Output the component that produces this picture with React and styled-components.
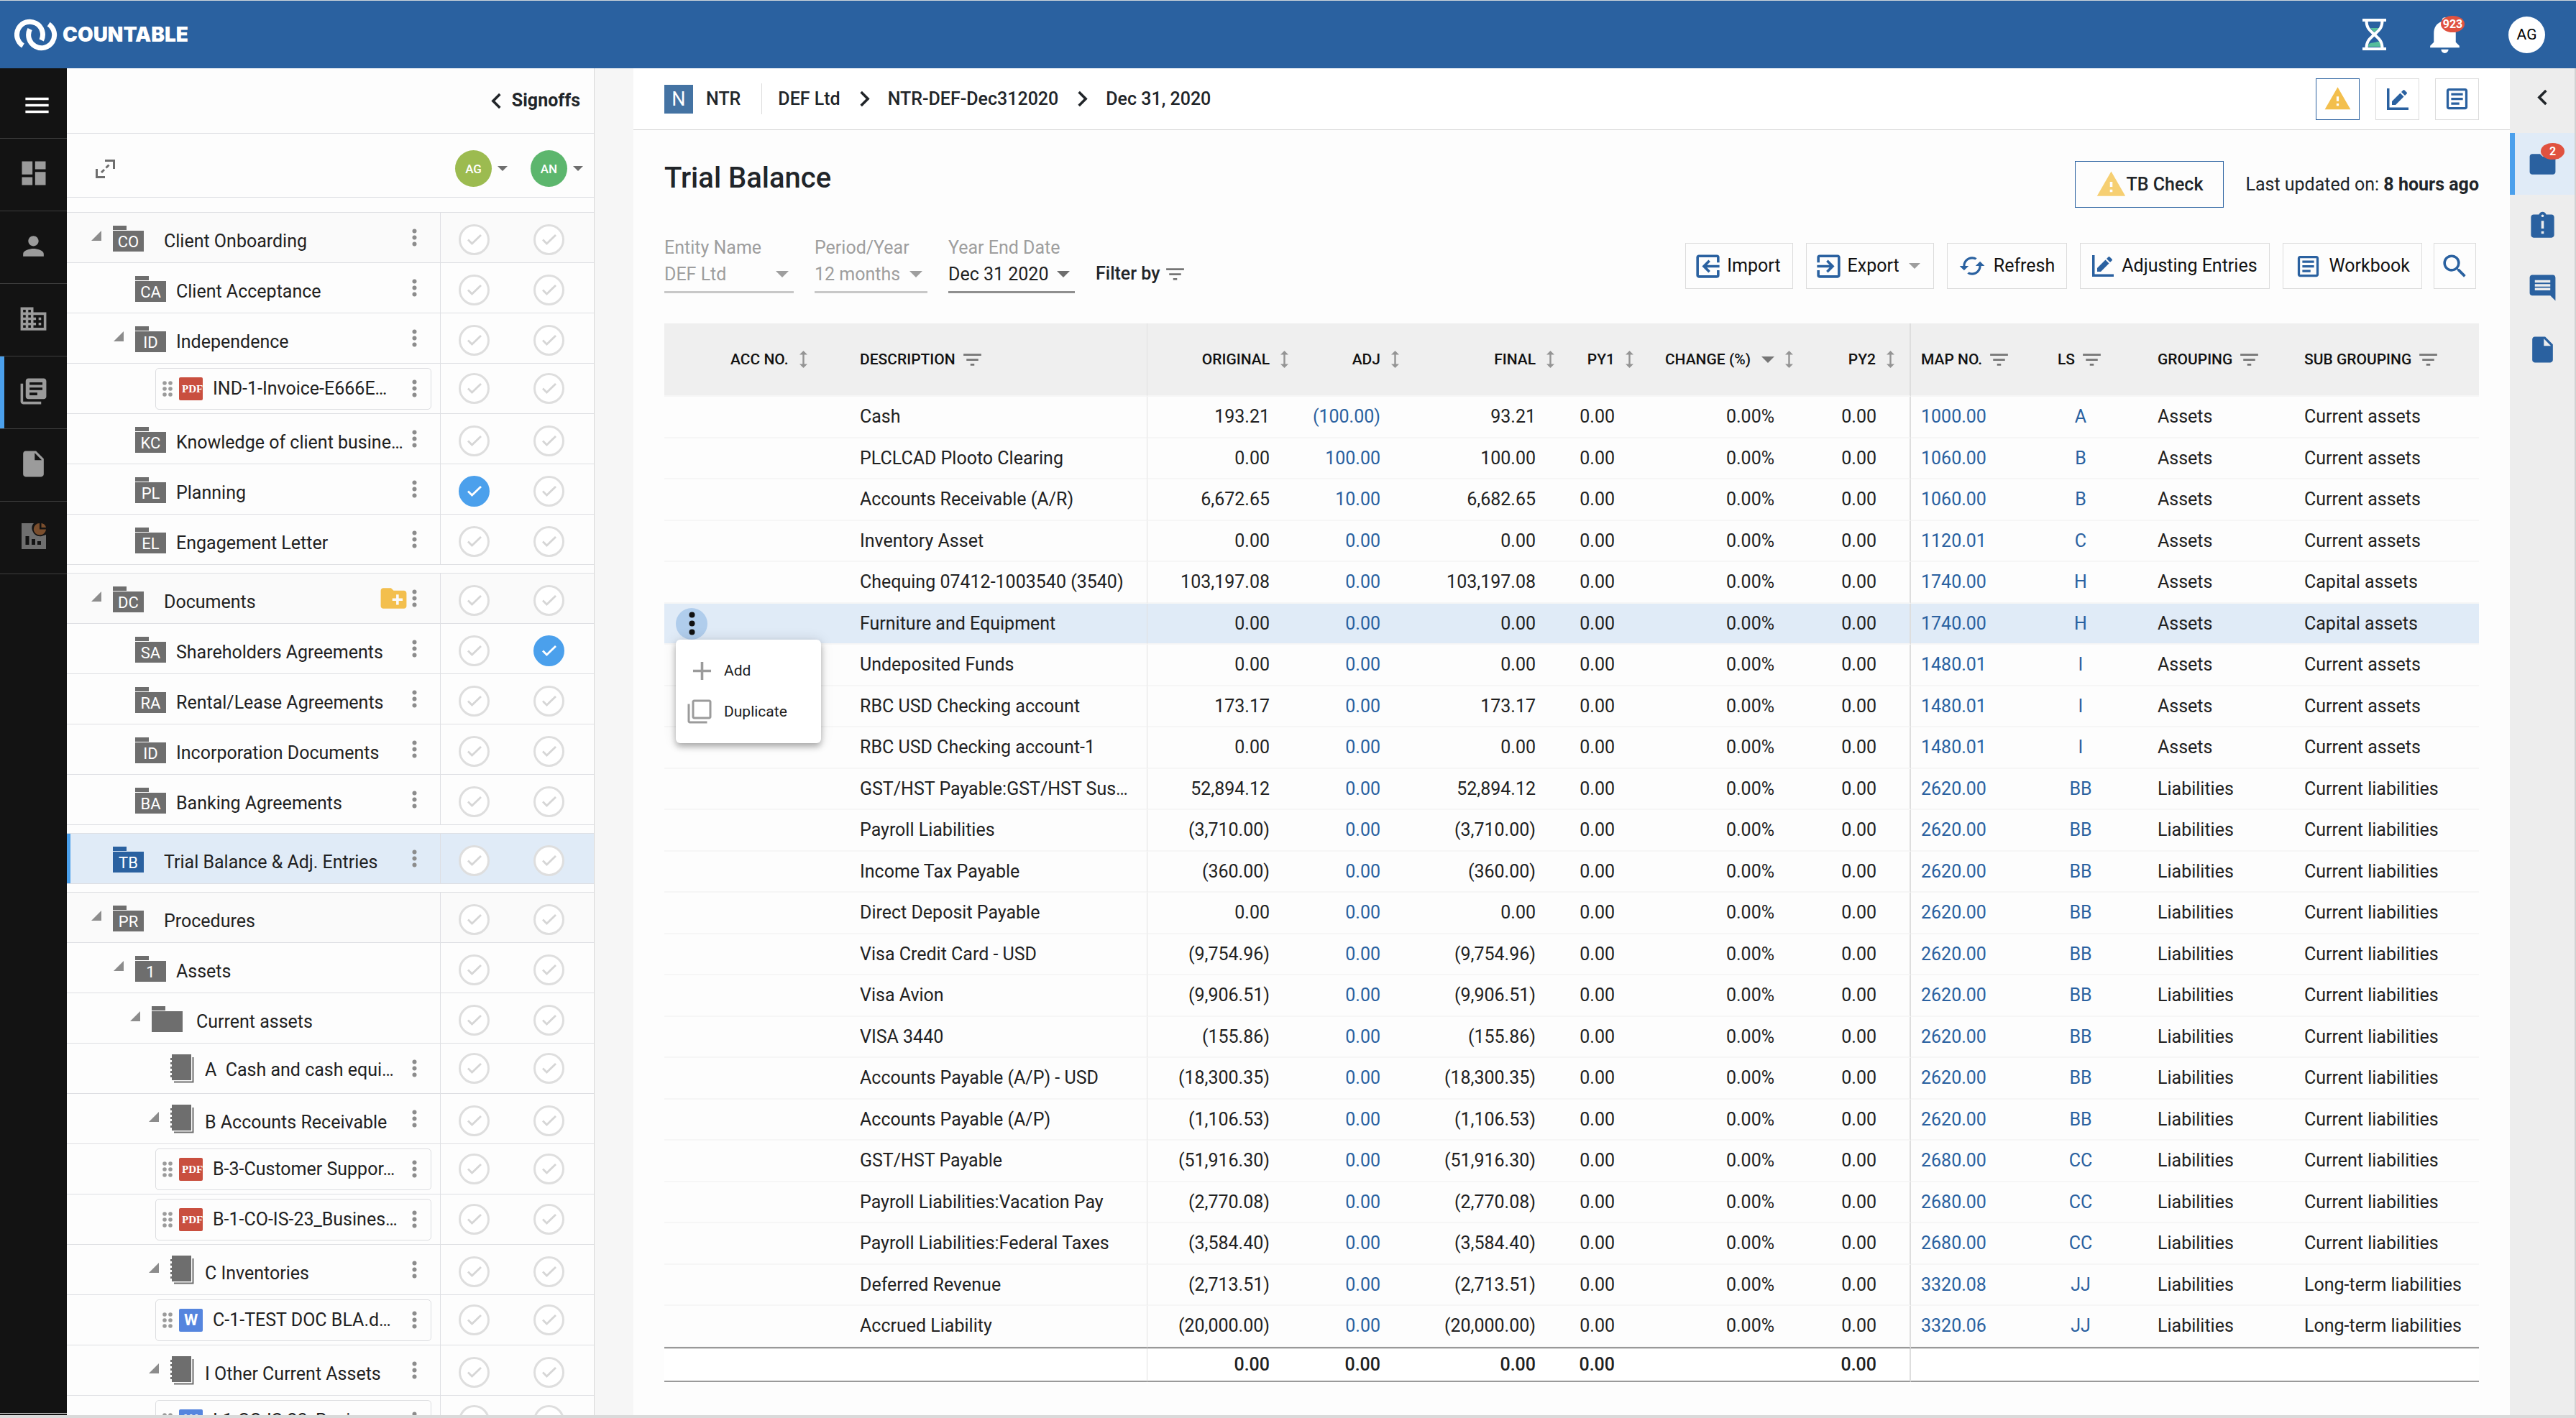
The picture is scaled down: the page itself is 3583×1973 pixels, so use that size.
import React from 'react'
import styled, { createGlobalStyle, css } from 'styled-components'
import {
  MdAdd,
  MdAssignmentLate,
  MdBusiness,
  MdCached,
  MdChevronLeft,
  MdChevronRight,
  MdComment,
  MdCreateNewFolder,
  MdDashboard,
  MdExitToApp,
  MdFilterList,
  MdFilterNone,
  MdFolder,
  MdInsertDriveFile,
  MdLibraryBooks,
  MdMenu,
  MdNotifications,
  MdOutlineArticle,
  MdPerson,
  MdSearch,
  MdWarning,
} from 'react-icons/md'

const colors = {
  brand: '#2a61a0',
  accent: '#4ba0ec',
  selected: '#e0ebf7',
  text: '#212121',
  heading: '#212529',
  muted: '#9e9e9e',
  icon: '#6e6e6e',
  line: '#dedfe3',
  danger: '#e05240',
  warning: '#f3bf4d',
  page: '#fdfdfd',
}

const GlobalStyle = createGlobalStyle`
  *, *::before, *::after {
    box-sizing: border-box;
  }

  body {
    margin: 0;
    font-family: Roboto, "Liberation Sans", sans-serif;
    font-size: 25px;
    line-height: 30px;
    color: ${colors.text};
    background: ${colors.page};
  }

  button, select, input {
    margin: 0;
    padding: 0;
    border: 0;
    background: none;
    font: inherit;
    color: inherit;
  }

  a {
    color: ${colors.brand};
    text-decoration: none;
  }

  svg {
    display: block;
    flex-shrink: 0;
  }
`

/* ---------- shell ---------- */

const Page = styled.div`
  display: flex;
  flex-direction: column;
  height: 100vh;
  overflow: hidden;
  border-bottom: 4px solid #dadada;
`

const TopBar = styled.header`
  display: flex;
  flex-shrink: 0;
  align-items: center;
  height: 95px;
  padding: 0 43px 0 20px;
  border-top: 1px solid #cfd6da;
  background: ${colors.brand};
  color: #fff;
`

const Brand = styled.a`
  display: flex;
  align-items: center;
  gap: 7px;
  margin-right: auto;
  color: #fff;
  font-family: Inter, sans-serif;
  font-size: 28px;
  font-weight: 900;
`

const BellButton = styled.button`
  position: relative;
  margin: 0 58px 0 51px;
`

const Badge = styled.span`
  position: absolute;
  top: ${props => props.$top}px;
  left: ${props => props.$left}px;
  width: 33px;
  height: 23px;
  border-radius: 50%;
  background: ${colors.danger};
  color: #fff;
  font-size: 16px;
  font-weight: 700;
  line-height: 23px;
  text-align: center;
`

const Avatar = styled.span`
  display: flex;
  align-items: center;
  justify-content: center;
  width: 51px;
  height: 51px;
  border-radius: 50%;
  background: ${props => props.$color};
  color: ${props => props.$text || '#fff'};
  font-size: ${props => props.$size || 17}px;
`

const Body = styled.div`
  display: flex;
  flex: 1;
  min-height: 0;
`

const Rail = styled.nav`
  display: flex;
  flex-direction: column;
  flex-shrink: 0;
  width: 93px;
  background: #131313;
  color: #9b9b9b;

  &::after {
    content: '';
    height: 3px;
    margin-top: auto;
    border-top: 1px solid #d0d0d0;
  }
`

const RailButton = styled.button`
  display: flex;
  align-items: center;
  justify-content: center;
  height: ${props => (props.$first ? 98 : 101)}px;
  padding: ${props => (props.$first ? '6px 0 0 9px' : '0 0 4px')};
  border-bottom: 1px solid #3d3d3d;
  color: ${props => (props.$first ? '#fff' : 'inherit')};
  box-shadow: ${props => (props.$active ? `inset 6px 0 ${colors.accent}` : 'none')};
`

/* ---------- sign-off tree ---------- */

const Sidebar = styled.aside`
  display: flex;
  flex-direction: column;
  flex-shrink: 0;
  width: 734px;
  overflow: hidden;
  border-right: 1px solid #d8d8d8;
`

const SidebarTitle = styled.div`
  display: flex;
  flex-shrink: 0;
  align-items: center;
  justify-content: flex-end;
  height: 91px;
  padding-right: 19px;
  border-bottom: 1px solid ${colors.line};
  color: ${colors.heading};
  font-weight: 700;
`

const Reviewers = styled.div`
  display: flex;
  flex-shrink: 0;
  align-items: center;
  gap: 32px;
  height: 89px;
  padding: 9px 15px 0 40px;
  border-bottom: 1px solid ${colors.line};
  color: ${colors.icon};
`

const Reviewer = styled.button`
  display: flex;
  align-items: center;
  gap: 8px;
  font-weight: 500;
`

const ExpandButton = styled.button`
  margin-right: auto;
`

const Tree = styled.div`
  padding-top: 9px;
`

const TreeSection = styled.ul`
  margin: 11px 0 0;
  padding: 0;
  border-top: 1px solid ${colors.line};
  list-style: none;
`

const TreeRow = styled.li`
  display: flex;
  height: 70px;
  border-bottom: 1px solid ${colors.line};
  background: ${props => (props.$active ? colors.selected : props.$head ? '#fafafa' : colors.page)};
  box-shadow: ${props => (props.$active ? `inset 5px 0 ${colors.accent}` : 'none')};
`

const indents = { 1: 34, 2: 65, 3: 88, 4: 114 }
const labelGaps = { 1: 28, 2: 14, 3: 19, 4: 15 }

const TreeCell = styled.div`
  display: flex;
  align-items: center;
  width: 520px;
  padding: 0 32px 0 ${props => indents[props.$level]}px;
  border-right: 1px solid ${colors.line};
  color: #8c8c8c;
`

const FileCell = styled(TreeCell)`
  padding: 0 12px 0 123px;
`

const CaretSlot = styled.span`
  width: 14px;
  margin: 0 16px 5px 0;
`

const TreeLabel = styled.span`
  flex: 1;
  min-width: 0;
  padding-top: ${props => (props.$flat ? 4 : 11)}px;
  margin-left: ${props => labelGaps[props.$level]}px;
  overflow: hidden;
  color: ${colors.text};
  white-space: pre;
`

const NewFolderButton = styled.button`
  margin-right: 4px;
  color: ${colors.warning};
`

const FolderTag = styled.span`
  width: 43px;
  margin-top: 2px;
  color: #fff;
  font-size: 22px;
  line-height: 32px;
  text-align: center;

  &::before {
    content: '';
    display: block;
    width: 19px;
    height: 6px;
    margin-bottom: 1px;
    background: ${props => (props.$active ? colors.brand : colors.icon)};
  }
`

const FolderBody = styled.span`
  display: block;
  height: 29px;
  background: ${props => (props.$active ? colors.brand : colors.icon)};
`

const FileCard = styled.div`
  display: flex;
  align-items: center;
  width: 100%;
  height: 58px;
  padding: 0 19px 0 9px;
  border: 1px solid #dcdde0;
  border-radius: 5px;
`

const FileType = styled.span`
  width: 33px;
  height: 32px;
  margin: 0 14px 0 9px;
  padding-left: ${props => (props.$pdf ? 4 : 0)}px;
  overflow: hidden;
  border-radius: 2px;
  background: ${props => (props.$pdf ? '#c94f3f' : '#5585de')};
  color: #fff;
  font-family: ${props => (props.$pdf ? '"Liberation Serif", serif' : 'Roboto, sans-serif')};
  font-size: ${props => (props.$pdf ? 15 : 22)}px;
  font-weight: 700;
  line-height: 32px;
  text-align: ${props => (props.$pdf ? 'left' : 'center')};
`

const FileName = styled.span`
  flex: 1;
  overflow: hidden;
  color: ${colors.text};
  white-space: nowrap;
`

const Signoffs = styled.div`
  display: flex;
  align-items: center;
  gap: 61px;
  padding-left: 25px;
  padding-top: ${props => (props.$flat ? 0 : 6)}px;
`

const SignoffLabel = styled.label`
  display: grid;
  place-items: center;
  width: 43px;
  height: 43px;
  color: #d6d6d6;

  & > * {
    grid-area: 1 / 1;
  }

  svg {
    pointer-events: none;
  }

  input {
    width: 43px;
    height: 43px;
    border: 3px solid #dedede;
    border-radius: 50%;
    background: #fff;
    appearance: none;
  }

  input:checked {
    border-color: ${colors.accent};
    background: ${colors.accent};
  }

  input:checked + svg {
    color: #fff;
  }
`

const Gutter = styled.div`
  flex-shrink: 0;
  width: 54px;
  background: #f6f6f6;
`

/* ---------- main panel ---------- */

const Main = styled.main`
  flex: 1;
  min-width: 0;
`

const Crumbs = styled.nav`
  display: flex;
  align-items: center;
  height: 86px;
  padding: 0 43px;
  border-bottom: 1px solid #d6d6d6;
  background: #fff;
  font-weight: 500;

  a {
    color: ${colors.heading};
  }

  & > svg {
    margin: 0 11px 0 12px;
    color: ${colors.heading};
  }
`

const ClientInitial = styled.span`
  width: 40px;
  height: 40px;
  margin-right: 18px;
  background: #4473a3;
  color: #fff;
  font-size: 27px;
  font-weight: 400;
  line-height: 40px;
  text-align: center;
`

const CrumbDivider = styled.span`
  width: 1px;
  height: 43px;
  margin: 0 22px 0 29px;
  background: #dcdcdc;
`

const CrumbActions = styled.div`
  display: flex;
  gap: 22px;
  margin-left: auto;
`

const IconButton = styled.button`
  display: flex;
  align-items: center;
  justify-content: center;
  width: 61px;
  height: 58px;
  border: 1px solid ${props => (props.$active ? colors.brand : '#dcdcdc')};

  svg {
    color: ${props => (props.$active ? colors.warning : colors.brand)};
  }
`

const Content = styled.div`
  padding: 43px 43px 0;
`

const TitleRow = styled.div`
  display: flex;
  align-items: center;
  height: 65px;
  color: ${colors.heading};
`

const Title = styled.h1`
  margin: 0 auto 18px 0;
  font-size: 40px;
  font-weight: 500;
  line-height: 48px;
`

const CheckButton = styled.button`
  display: flex;
  align-items: center;
  height: 65px;
  margin-right: 30px;
  padding: 0 28px;
  border: 1px solid ${colors.brand};
  font-weight: 500;

  svg {
    color: #f6cf72;
  }
`

const Toolbar = styled.div`
  display: flex;
  align-items: flex-end;
  margin: 41px 0 42px;
`

const Field = styled.div`
  width: ${props => props.$width}px;
  margin-right: 29px;
  color: ${props => (props.$enabled ? colors.text : colors.muted)};

  label {
    display: block;
    color: ${colors.muted};
  }
`

const SelectBox = styled.div`
  display: grid;
  align-items: center;
  height: 48px;
  padding-bottom: 2px;
  border-bottom: 3px solid ${props => (props.$enabled ? '#8f8f8f' : '#c8c8c8')};

  & > * {
    grid-area: 1 / 1;
  }

  select {
    width: 100%;
    appearance: none;
    opacity: 1;
  }

  svg {
    margin-left: auto;
    margin-right: 7px;
    color: ${props => (props.$enabled ? '#6e6e6e' : colors.muted)};
    pointer-events: none;
  }
`

const FilterBy = styled.button`
  display: flex;
  align-items: center;
  gap: 5px;
  height: 54px;
  color: ${colors.heading};
  font-weight: 500;

  svg {
    color: #767676;
  }
`

const Actions = styled.div`
  display: flex;
  gap: 18px;
  margin: 0 4px 6px auto;
`

const ActionButton = styled.button`
  display: flex;
  align-items: center;
  gap: ${props => (props.$roomy ? 8 : 5)}px;
  height: 64px;
  padding: 0 16px 0 ${props => (props.$roomy ? 13 : 9)}px;
  border: 1px solid #dcdcdc;
  color: #111;

  span + svg {
    margin: 0 2px 0 8px;
    color: ${colors.muted};
  }
`

const IconBox = styled.span`
  display: flex;
  justify-content: center;
  width: 43px;
  color: ${colors.brand};
  transform: ${props => (props.$flip ? 'scaleX(-1)' : 'none')};
`

const SearchButton = styled(IconButton)`
  width: 59px;
  height: 64px;
  margin-left: -2px;
`

/* ---------- trial balance table ---------- */

const Table = styled.table`
  width: 100%;
  border-spacing: 0;
  table-layout: fixed;
`

const ruled = css`
  &:nth-child(2) {
    border-right: 1px solid #e0e0e0;
  }

  &:nth-child(8) {
    border-right: 2px solid #dedede;
  }
`

const Th = styled.th`
  height: 102px;
  padding: 0 ${props => (props.$edge ? 21 : 10)}px 0 14px;
  border-bottom: 2px solid #f6f6f6;
  background: #efefef;
  color: #111;
  font-size: 21px;
  font-weight: 500;
  ${ruled}
`

const ThInner = styled.div`
  display: flex;
  align-items: center;
  justify-content: ${props => (props.$align === 'right' ? 'flex-end' : props.$align === 'center' ? 'center' : 'flex-start')};
  gap: ${props => (props.$sort ? 15 : 7)}px;
  padding: 0 ${props => (props.$align === 'center' ? 4 : 0)}px 0 ${props => props.$indent || 0}px;
  white-space: nowrap;

  svg {
    color: #767676;
  }
`

const Row = styled.tr`
  height: 57px;
  background: ${props => (props.$active ? colors.selected : 'transparent')};

  &:nth-child(odd) {
    height: 58px;
  }
`

const Td = styled.td`
  padding: 0 ${props => (props.$edge ? 46 : props.$align === 'right' ? 36 : 14)}px 0 14px;
  border-bottom: 2px solid #f6f6f6;
  text-align: ${props => props.$align || 'left'};
  white-space: nowrap;
  ${ruled}
`

const TotalTd = styled(Td)`
  height: 48px;
  border-top: 1px solid #111;
  border-bottom: 2px solid #9a9a9a;
  background: #fff;
  font-weight: 500;
`

const RowMenuAnchor = styled.div`
  position: relative;
  width: 44px;
  margin-left: 2px;
`

const RowMenuButton = styled.button`
  display: flex;
  align-items: center;
  justify-content: center;
  width: 44px;
  height: 44px;
  border-radius: 50%;
  background: #b0cdec;
  color: #111;
`

const RowMenu = styled.div`
  position: absolute;
  z-index: 2;
  top: 44px;
  left: 0;
  width: 202px;
  padding: 15px 0;
  border-radius: 6px;
  background: #fff;
  box-shadow: 0 5px 9px rgba(0, 0, 0, 0.28), 0 0 18px rgba(0, 0, 0, 0.12);
`

const RowMenuItem = styled.button`
  display: grid;
  grid-template-columns: 43px auto;
  align-items: center;
  gap: 9px;
  width: 100%;
  height: 57px;
  padding-left: 15px;
  font-size: 21px;
  text-align: left;

  svg {
    color: #9b9b9b;
  }
`

/* ---------- right rail ---------- */

const SideTabs = styled.nav`
  display: flex;
  flex-direction: column;
  flex-shrink: 0;
  width: 92px;
  border-right: 2px solid #d2d2d2;
  background: #ededed;
`

const SideTab = styled.button`
  position: relative;
  display: flex;
  align-items: center;
  justify-content: center;
  height: ${props => (props.$toggle ? 90 : 86)}px;
  padding-bottom: ${props => (props.$toggle ? 10 : 0)}px;
  background: ${props => (props.$active ? colors.selected : 'transparent')};
  box-shadow: ${props => (props.$active ? `inset 7px 0 ${colors.accent}` : 'none')};
  color: ${props => (props.$toggle ? colors.heading : colors.brand)};
`

/* ---------- drawings ---------- */

const Logo = () => (
  <svg width="60" height="45" viewBox="21 25 60 45" fill="none" stroke="currentColor" strokeWidth="7">
    <path d="M33 62.5A18 18 0 1 1 58.7 55" />
    <path d="M42.6 39.5A18 18 0 1 0 68.6 32.6" />
  </svg>
)

const Hourglass = () => (
  <svg width="33" height="44" viewBox="0 0 33 44" fill="none">
    <path d="M11 13h12l-6.500 6z" fill="#56bd9b" />
    <path d="M8 39c0-4 1-5 9-6 3-.5 6-2.500 8 0l1 6z" fill="#56bd9b" />
    <path d="M5.500 3c0 11 6 14 11 19 5 5 11 8 11 19M27.500 3c0 11-6 14-11 19-5 5-11 8-11 19" stroke="#fff" strokeWidth="4" />
    <path d="M0 2h33M0 42h33" stroke="#fff" strokeWidth="4" />
  </svg>
)

const ReportIcon = () => (
  <svg width="34" height="36" viewBox="0 0 34 36">
    <path d="M0 0h17c-3 3-3 7-2 10 2 6 7 9 13 8l6-2v20H0z" fill="#6f6f6f" />
    <path d="M5.500 18h5v12h-5zM14 22h5v8h-5zM22 25h5v5h-5z" fill="#131313" />
    <path d="M25 0a8 8 0 0 0 0 16.500c5 0 8.500-3.500 9-8H25z" fill="#7a4e2d" />
    <path d="M27.500 0c3.500.5 6 3 6.500 6h-6.500z" fill="#7a4e2d" />
  </svg>
)

const Expand = () => (
  <svg width="27" height="26" viewBox="0 0 27 26" fill="none" stroke="currentColor" strokeWidth="3">
    <path d="M13 1.500h12.500V13M1.500 13v11.500H13M8 18l4-4M14.500 11.500l4-4" />
  </svg>
)

const Triangle = ({ size = 18 }) => (
  <svg width={size} height={size / 2} viewBox="0 0 18 9" fill="currentColor">
    <path d="M0 0h18L9 9z" />
  </svg>
)

const Caret = () => (
  <svg width="14" height="14" viewBox="0 0 14 14" fill="currentColor">
    <path d="M14 0v14H0z" />
  </svg>
)

const Kebab = ({ r = 3 }) => (
  <svg width={r * 2 + 1} height={r * 8 + 1} viewBox={`0 0 ${r * 2 + 1} ${r * 8 + 1}`} fill="currentColor">
    <circle cx={r + 0.5} cy={r + 0.5} r={r} />
    <circle cx={r + 0.5} cy={r * 4 + 0.5} r={r} />
    <circle cx={r + 0.5} cy={r * 7 + 0.5} r={r} />
  </svg>
)

const Grip = () => (
  <svg width="14" height="22" viewBox="0 0 14 22" fill="#9b9b9b">
    {[3, 11, 19].map(y => (
      <g key={y}>
        <circle cx="3" cy={y} r="2.8" />
        <circle cx="11" cy={y} r="2.8" />
      </g>
    ))}
  </svg>
)

const Book = () => (
  <svg width="33" height="40" viewBox="0 0 33 40">
    <path d="M2 0h27v36H2z" fill="#6e6e6e" />
    <path d="M31.500 4v34.500H5" fill="none" stroke="#6e6e6e" strokeWidth="2" />
    <path d="M1 5v30" fill="none" stroke="#6e6e6e" strokeWidth="2" strokeDasharray="3 3" />
  </svg>
)

const Tick = () => (
  <svg width="20" height="15" viewBox="0 0 20 15" fill="none" stroke="currentColor" strokeWidth="2.800">
    <path d="M1 7.500l5.500 5.500L19 1" />
  </svg>
)

const Sort = () => (
  <svg width="11" height="24" viewBox="0 0 11 24" fill="#949494">
    <path d="M5.500 0L11 5.500H6.700v13H11L5.500 24 0 18.500h4.300v-13H0z" />
  </svg>
)

const ChartEdit = () => (
  <svg width="30" height="30" viewBox="0 0 30 30" fill="currentColor">
    <path d="M0 0h3.500v26.500H30V30H0z" />
    <path d="M7 23v-5L18.500 6.500l5 5L12 23z" />
    <path d="M20 5l2.500-2.500q1-1 2 0l3 3q1 1 0 2L25 10z" />
  </svg>
)

/* ---------- data ---------- */

const sections = [
  [
    { level: 1, tag: 'CO', label: 'Client Onboarding', open: true, head: true },
    { level: 2, tag: 'CA', label: 'Client Acceptance' },
    { level: 2, tag: 'ID', label: 'Independence', open: true },
    { file: 'PDF', label: 'IND-1-Invoice-E666E…' },
    { level: 2, tag: 'KC', label: 'Knowledge of client busine…' },
    { level: 2, tag: 'PL', label: 'Planning', signed: [true, false] },
    { level: 2, tag: 'EL', label: 'Engagement Letter' },
  ],
  [
    { level: 1, tag: 'DC', label: 'Documents', open: true, head: true, addFolder: true },
    { level: 2, tag: 'SA', label: 'Shareholders Agreements', signed: [false, true] },
    { level: 2, tag: 'RA', label: 'Rental/Lease Agreements' },
    { level: 2, tag: 'ID', label: 'Incorporation Documents' },
    { level: 2, tag: 'BA', label: 'Banking Agreements' },
  ],
  [{ level: 1, tag: 'TB', label: 'Trial Balance & Adj. Entries', active: true }],
  [
    { level: 1, tag: 'PR', label: 'Procedures', open: true, head: true, noMenu: true },
    { level: 2, tag: '1', label: 'Assets', open: true, noMenu: true },
    { level: 3, tag: '', label: 'Current assets', open: true, noMenu: true },
    { level: 4, label: 'A  Cash and cash equi…', flat: true },
    { level: 4, label: 'B Accounts Receivable', open: true },
    { file: 'PDF', label: 'B-3-Customer Suppor…' },
    { file: 'PDF', label: 'B-1-CO-IS-23_Busines…' },
    { level: 4, label: 'C Inventories', open: true },
    { file: 'W', label: 'C-1-TEST DOC BLA.d…' },
    { level: 4, label: 'I Other Current Assets', open: true },
    { file: 'W', label: 'I-1-CO-IS-23_Busine…' },
  ],
]

const accounts = [
  ['Cash', '193.21', '(100.00)', '93.21', '1000.00', 'A', 'Assets', 'Current assets'],
  ['PLCLCAD Plooto Clearing', '0.00', '100.00', '100.00', '1060.00', 'B', 'Assets', 'Current assets'],
  ['Accounts Receivable (A/R)', '6,672.65', '10.00', '6,682.65', '1060.00', 'B', 'Assets', 'Current assets'],
  ['Inventory Asset', '0.00', '0.00', '0.00', '1120.01', 'C', 'Assets', 'Current assets'],
  ['Chequing 07412-1003540 (3540)', '103,197.08', '0.00', '103,197.08', '1740.00', 'H', 'Assets', 'Capital assets'],
  ['Furniture and Equipment', '0.00', '0.00', '0.00', '1740.00', 'H', 'Assets', 'Capital assets'],
  ['Undeposited Funds', '0.00', '0.00', '0.00', '1480.01', 'I', 'Assets', 'Current assets'],
  ['RBC USD Checking account', '173.17', '0.00', '173.17', '1480.01', 'I', 'Assets', 'Current assets'],
  ['RBC USD Checking account-1', '0.00', '0.00', '0.00', '1480.01', 'I', 'Assets', 'Current assets'],
  ['GST/HST Payable:GST/HST Sus…', '52,894.12', '0.00', '52,894.12', '2620.00', 'BB', 'Liabilities', 'Current liabilities'],
  ['Payroll Liabilities', '(3,710.00)', '0.00', '(3,710.00)', '2620.00', 'BB', 'Liabilities', 'Current liabilities'],
  ['Income Tax Payable', '(360.00)', '0.00', '(360.00)', '2620.00', 'BB', 'Liabilities', 'Current liabilities'],
  ['Direct Deposit Payable', '0.00', '0.00', '0.00', '2620.00', 'BB', 'Liabilities', 'Current liabilities'],
  ['Visa Credit Card - USD', '(9,754.96)', '0.00', '(9,754.96)', '2620.00', 'BB', 'Liabilities', 'Current liabilities'],
  ['Visa Avion', '(9,906.51)', '0.00', '(9,906.51)', '2620.00', 'BB', 'Liabilities', 'Current liabilities'],
  ['VISA 3440', '(155.86)', '0.00', '(155.86)', '2620.00', 'BB', 'Liabilities', 'Current liabilities'],
  ['Accounts Payable (A/P) - USD', '(18,300.35)', '0.00', '(18,300.35)', '2620.00', 'BB', 'Liabilities', 'Current liabilities'],
  ['Accounts Payable (A/P)', '(1,106.53)', '0.00', '(1,106.53)', '2620.00', 'BB', 'Liabilities', 'Current liabilities'],
  ['GST/HST Payable', '(51,916.30)', '0.00', '(51,916.30)', '2680.00', 'CC', 'Liabilities', 'Current liabilities'],
  ['Payroll Liabilities:Vacation Pay', '(2,770.08)', '0.00', '(2,770.08)', '2680.00', 'CC', 'Liabilities', 'Current liabilities'],
  ['Payroll Liabilities:Federal Taxes', '(3,584.40)', '0.00', '(3,584.40)', '2680.00', 'CC', 'Liabilities', 'Current liabilities'],
  ['Deferred Revenue', '(2,713.51)', '0.00', '(2,713.51)', '3320.08', 'JJ', 'Liabilities', 'Long-term liabilities'],
  ['Accrued Liability', '(20,000.00)', '0.00', '(20,000.00)', '3320.06', 'JJ', 'Liabilities', 'Long-term liabilities'],
]

// widths are shares of the row, the fixed layout stretches them to fit
const columns = [
  { name: 'ACC NO.', width: 258, sort: true, align: 'left', indent: 78 },
  { name: 'DESCRIPTION', width: 414 },
  { name: 'ORIGINAL', width: 206, sort: true, align: 'right' },
  { name: 'ADJ', width: 154, sort: true, align: 'right' },
  { name: 'FINAL', width: 216, sort: true, align: 'right' },
  { name: 'PY1', width: 110, sort: true, align: 'right' },
  { name: 'CHANGE (%)', width: 222, sort: true, drop: true, align: 'right' },
  { name: 'PY2', width: 154, sort: true, align: 'right', edge: true },
  { name: 'MAP NO.', width: 143 },
  { name: 'LS', width: 186, align: 'center' },
  { name: 'GROUPING', width: 204 },
  { name: 'SUB GROUPING', width: 257 },
]

/* ---------- pieces ---------- */

const SignoffChecks = ({ row }) => (
  <Signoffs $flat={row.flat || row.file}>
    {['AG', 'AN'].map((who, i) => (
      <SignoffLabel key={who}>
        <input
          type="checkbox"
          aria-label={`${row.label} signed off by ${who}`}
          defaultChecked={Boolean(row.signed && row.signed[i])}
        />
        <Tick />
      </SignoffLabel>
    ))}
  </Signoffs>
)

const TreeItem = ({ row }) => (
  <TreeRow $head={row.head} $active={row.active}>
    {row.file ? (
      <FileCell>
        <FileCard>
          <Grip />
          <FileType $pdf={row.file === 'PDF'}>{row.file}</FileType>
          <FileName>{row.label}</FileName>
          <button type="button" aria-label="File options"><Kebab /></button>
        </FileCard>
      </FileCell>
    ) : (
      <TreeCell $level={row.level}>
        <CaretSlot>{row.open && <Caret />}</CaretSlot>
        {row.level === 4 ? (
          <Book />
        ) : (
          <FolderTag $active={row.active}>
            <FolderBody $active={row.active}>{row.tag}</FolderBody>
          </FolderTag>
        )}
        <TreeLabel $level={row.level} $flat={row.flat}>{row.label}</TreeLabel>
        {row.addFolder && (
          <NewFolderButton type="button" aria-label="New folder">
            <MdCreateNewFolder size={43} />
          </NewFolderButton>
        )}
        {!row.noMenu && (
          <button type="button" aria-label="Folder options"><Kebab /></button>
        )}
      </TreeCell>
    )}
    <SignoffChecks row={row} />
  </TreeRow>
)

const SelectField = ({ id, label, value, width, enabled }) => (
  <Field $width={width} $enabled={enabled}>
    <label htmlFor={id}>{label}</label>
    <SelectBox $enabled={enabled}>
      <select id={id} defaultValue={value} disabled={!enabled}>
        <option>{value}</option>
      </select>
      <Triangle />
    </SelectBox>
  </Field>
)

const HeaderCell = ({ column }) => (
  <Th scope="col" $edge={column.edge}>
    <ThInner $align={column.align} $indent={column.indent} $sort={column.sort}>
      <span>{column.name}</span>
      {column.drop && <Triangle />}
      {column.sort ? <Sort /> : <MdFilterList size={33} />}
    </ThInner>
  </Th>
)

const AccountRow = ({ account, active }) => {
  const [name, original, adj, final, mapNo, ls, group, subGroup] = account
  return (
    <Row $active={active}>
      <Td>
        {active && (
          <RowMenuAnchor>
            <RowMenuButton type="button" aria-label="Row options"><Kebab r={4} /></RowMenuButton>
            <RowMenu>
              <RowMenuItem type="button"><MdAdd size={43} />Add</RowMenuItem>
              <RowMenuItem type="button"><MdFilterNone size={36} />Duplicate</RowMenuItem>
            </RowMenu>
          </RowMenuAnchor>
        )}
      </Td>
      <Td>{name}</Td>
      <Td $align="right">{original}</Td>
      <Td $align="right"><a href="#adjustments">{adj}</a></Td>
      <Td $align="right">{final}</Td>
      <Td $align="right">0.00</Td>
      <Td $align="right">0.00%</Td>
      <Td $align="right" $edge>0.00</Td>
      <Td><a href="#map">{mapNo}</a></Td>
      <Td $align="center"><a href="#leadsheet">{ls}</a></Td>
      <Td>{group}</Td>
      <Td>{subGroup}</Td>
    </Row>
  )
}

const TrialBalanceTable = () => (
  <Table>
    <colgroup>
      {columns.map(column => <col key={column.name} width={column.width} />)}
    </colgroup>
    <thead>
      <tr>{columns.map(column => <HeaderCell key={column.name} column={column} />)}</tr>
    </thead>
    <tbody>
      {accounts.map(account => (
        <AccountRow
          key={account[0]}
          account={account}
          active={account[0] === 'Furniture and Equipment'}
        />
      ))}
    </tbody>
    <tfoot>
      <tr>
        {['', '', '0.00', '0.00', '0.00', '0.00', '', '0.00', '', '', '', ''].map((total, i) => (
          <TotalTd key={columns[i].name} $align={columns[i].align} $edge={columns[i].edge}>{total}</TotalTd>
        ))}
      </tr>
    </tfoot>
  </Table>
)

const App = () => (
  <Page>
    <GlobalStyle />
    <TopBar>
      <Brand href="#home"><Logo />COUNTABLE</Brand>
      <button type="button" aria-label="Time tracking"><Hourglass /></button>
      <BellButton type="button" aria-label="Notifications">
        <MdNotifications size={61} />
        <Badge $top={4} $left={25}>923</Badge>
      </BellButton>
      <Avatar $color="#fff" $text="#000" $size={21}>AG</Avatar>
    </TopBar>
    <Body>
      <Rail>
        <RailButton type="button" aria-label="Menu" $first><MdMenu size={43} /></RailButton>
        <RailButton type="button" aria-label="Dashboard"><MdDashboard size={44} /></RailButton>
        <RailButton type="button" aria-label="Contacts"><MdPerson size={43} /></RailButton>
        <RailButton type="button" aria-label="Entities"><MdBusiness size={43} /></RailButton>
        <RailButton type="button" aria-label="Engagements" $active><MdLibraryBooks size={43} /></RailButton>
        <RailButton type="button" aria-label="Templates"><MdInsertDriveFile size={43} /></RailButton>
        <RailButton type="button" aria-label="Reports"><ReportIcon /></RailButton>
      </Rail>
      <Sidebar>
        <SidebarTitle><MdChevronLeft size={43} />Signoffs</SidebarTitle>
        <Reviewers>
          <ExpandButton type="button" aria-label="Expand tree"><Expand /></ExpandButton>
          <Reviewer type="button"><Avatar $color="#9cbb50">AG</Avatar><Triangle size={14} /></Reviewer>
          <Reviewer type="button"><Avatar $color="#5cb66d">AN</Avatar><Triangle size={14} /></Reviewer>
        </Reviewers>
        <Tree>
          {sections.map(rows => (
            <TreeSection key={rows[0].tag}>
              {rows.map(row => <TreeItem key={row.label} row={row} />)}
            </TreeSection>
          ))}
        </Tree>
      </Sidebar>
      <Gutter />
      <Main>
        <Crumbs>
          <ClientInitial>N</ClientInitial>
          <a href="#client">NTR</a>
          <CrumbDivider />
          <a href="#entity">DEF Ltd</a>
          <MdChevronRight size={43} />
          <a href="#engagement">NTR-DEF-Dec312020</a>
          <MdChevronRight size={43} />
          <a href="#period">Dec 31, 2020</a>
          <CrumbActions>
            <IconButton type="button" aria-label="Warnings" $active><MdWarning size={39} /></IconButton>
            <IconButton type="button" aria-label="Adjusting entries"><ChartEdit /></IconButton>
            <IconButton type="button" aria-label="Workbook"><MdOutlineArticle size={39} /></IconButton>
          </CrumbActions>
        </Crumbs>
        <Content>
          <TitleRow>
            <Title>Trial Balance</Title>
            <CheckButton type="button"><MdWarning size={43} />TB Check</CheckButton>
            <span>Last updated on: <b>8 hours ago</b></span>
          </TitleRow>
          <Toolbar>
            <SelectField id="entity" label="Entity Name" value="DEF Ltd" width={180} />
            <SelectField id="period" label="Period/Year" value="12 months" width={157} />
            <SelectField id="year-end" label="Year End Date" value="Dec 31 2020" width={176} enabled />
            <FilterBy type="button">Filter by<MdFilterList size={33} /></FilterBy>
            <Actions>
              <ActionButton type="button">
                <IconBox $flip><MdExitToApp size={43} /></IconBox>Import
              </ActionButton>
              <ActionButton type="button">
                <IconBox><MdExitToApp size={43} /></IconBox><span>Export</span><Triangle size={16} />
              </ActionButton>
              <ActionButton type="button" $roomy>
                <IconBox><MdCached size={38} /></IconBox>Refresh
              </ActionButton>
              <ActionButton type="button">
                <IconBox><ChartEdit /></IconBox>Adjusting Entries
              </ActionButton>
              <ActionButton type="button" $roomy>
                <IconBox><MdOutlineArticle size={39} /></IconBox>Workbook
              </ActionButton>
              <SearchButton type="button" aria-label="Search"><MdSearch size={43} /></SearchButton>
            </Actions>
          </Toolbar>
          <TrialBalanceTable />
        </Content>
      </Main>
      <SideTabs>
        <SideTab type="button" aria-label="Open panel" $toggle><MdChevronLeft size={43} /></SideTab>
        <SideTab type="button" aria-label="Files" $active>
          <MdFolder size={43} />
          <Badge $top={14} $left={43}>2</Badge>
        </SideTab>
        <SideTab type="button" aria-label="Issues"><MdAssignmentLate size={43} /></SideTab>
        <SideTab type="button" aria-label="Comments"><MdComment size={43} /></SideTab>
        <SideTab type="button" aria-label="Notes"><MdInsertDriveFile size={43} /></SideTab>
      </SideTabs>
    </Body>
  </Page>
)

export default App
